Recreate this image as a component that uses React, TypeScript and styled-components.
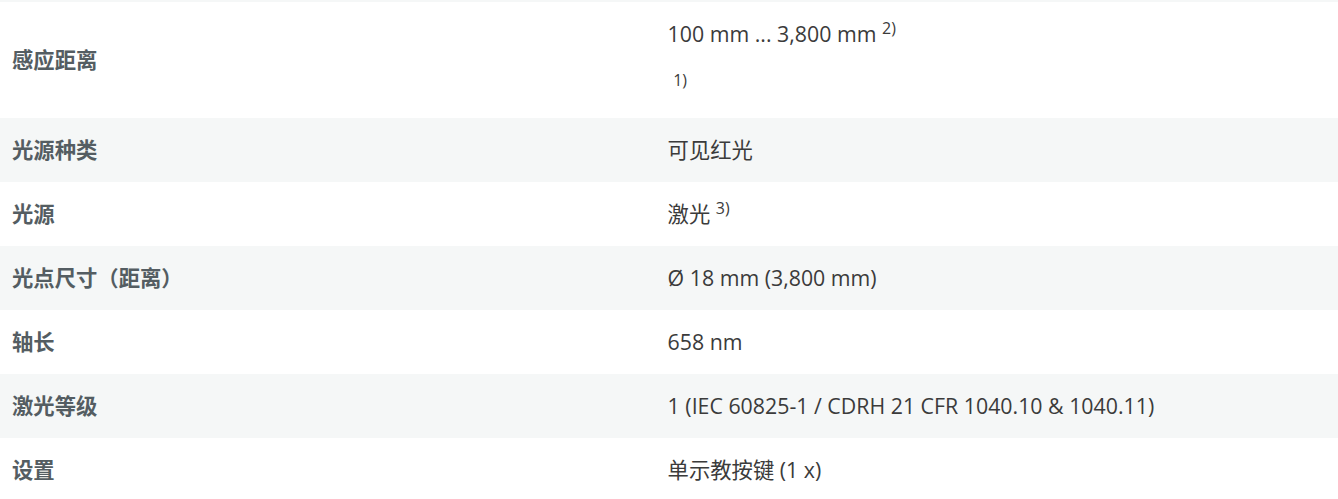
import React from 'react';
import styled, { createGlobalStyle } from 'styled-components';

const GlobalStyle = createGlobalStyle`
    html, body {
        margin: 0;
        padding: 0;
        background: #ffffff;
    }
    body {
        font-family: "Open Sans", "Noto Sans CJK SC", sans-serif;
    }
`;

const Table = styled.div`
    width: 100%;
    display: flex;
    flex-direction: column;
`;

const TopEdge = styled.div`
    height: 2px;
    background: #f5f7f7;
`;

const Row = styled.div<{ shaded: boolean }>`
    display: grid;
    grid-template-columns: 49% 1fr;
    align-items: center;
    background: ${props => (props.shaded ? '#f5f7f7' : '#ffffff')};
`;

const Label = styled.div`
    padding: 16px 12px;
    font-family: "Open Sans", "Noto Sans CJK SC", sans-serif;
    font-size: 21.33px;
    line-height: 32px;
    font-weight: 700;
    color: #545d62;
`;

const Value = styled.div`
    padding: 16px 12px;
    font-family: "Open Sans", "Noto Sans CJK SC", sans-serif;
    font-size: 21.33px;
    line-height: 32px;
    color: #3b3b3b;
`;

const Para = styled.p`
    margin: 0;
    & + & {
        margin-top: 20px;
    }
`;

const Note = styled.sup`
    font-size: 16px;
    line-height: 0;
    vertical-align: 8px;
`;

type Spec = {
    label: string,
    lines: { text: string, note?: string }[],
}

const specs: Spec[] = [
    {
        label: '感应距离',
        lines: [
            { text: '100 mm ... 3,800 mm', note: '2)' },
            { text: '', note: '1)' },
        ],
    },
    { label: '光源种类', lines: [{ text: '可见红光' }] },
    { label: '光源', lines: [{ text: '激光', note: '3)' }] },
    { label: '光点尺寸（距离）', lines: [{ text: 'Ø 18 mm (3,800 mm)' }] },
    { label: '轴长', lines: [{ text: '658 nm' }] },
    { label: '激光等级', lines: [{ text: '1 (IEC 60825-1 / CDRH 21 CFR 1040.10 & 1040.11)' }] },
    { label: '设置', lines: [{ text: '单示教按键 (1 x)' }] },
];

const App = () => {
    return (
        <>
            <GlobalStyle />
            <Table>
                <TopEdge />
                {specs.map((spec, i) => (
                    <Row key={spec.label} shaded={i % 2 === 1}>
                        <Label>{spec.label}</Label>
                        <Value>
                            {spec.lines.map((line, j) => (
                                <Para key={j}>
                                    {line.text}
                                    {line.note && (
                                        <>
                                            {'\u00a0'}
                                            <Note>{line.note}</Note>
                                        </>
                                    )}
                                </Para>
                            ))}
                        </Value>
                    </Row>
                ))}
            </Table>
        </>
    );
};

export default App;
